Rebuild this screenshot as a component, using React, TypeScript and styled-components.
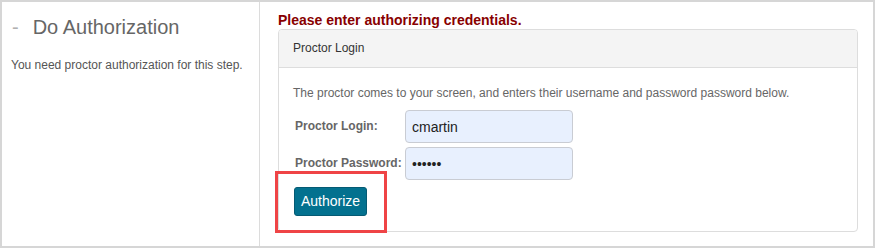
import React from "react";
import styled, { createGlobalStyle } from "styled-components";

const Global = createGlobalStyle`
  html, body { margin: 0; padding: 0; background: #fff; }
  body { font-family: "Liberation Sans", Arial, sans-serif; }
  * { box-sizing: border-box; }
`;

const Frame = styled.div`
  width: 875px;
  height: 248px;
  border: 2px solid #d6d6d6;
  display: grid;
  grid-template-columns: 257px 1px 1fr;
  background: #fff;
`;

const Sidebar = styled.div`
  padding: 13px 9px 0 9px;
`;

const Divider = styled.div`
  background: #dcdcdc;
`;

const Heading = styled.h2`
  margin: 0;
  font-size: 20px;
  line-height: 24px;
  font-weight: normal;
  color: #666;
  display: flex;
  align-items: center;
`;

const Dash = styled.span`
  color: #b0b0b0;
  margin: 0 14px 0 1px;
`;

const SideText = styled.p`
  margin: 18px 0 0 0;
  font-size: 12px;
  line-height: 17px;
  color: #555;
`;

const Main = styled.div`
  padding: 10px 15px 0 18px;
`;

const Alert = styled.div`
  font-size: 14px;
  font-weight: bold;
  line-height: 17px;
  color: #880000;
`;

const Panel = styled.div`
  border: 1px solid #dddddd;
  border-radius: 4px;
  width: 580px;
  height: 203px;
  overflow: visible;
`;

const PanelHeader = styled.div`
  background: #f4f4f4;
  border-bottom: 1px solid #dddddd;
  border-radius: 3px 3px 0 0;
  padding: 10px 14px;
  font-size: 12px;
  line-height: 17px;
  color: #333;
`;

const PanelBody = styled.div`
  padding: 17px 14px 15px 14px;
`;

const Intro = styled.p`
  margin: 0 0 8px 0;
  font-size: 12px;
  line-height: 17px;
  color: #666;
`;

const Form = styled.div`
  display: grid;
  grid-template-columns: 110px 168px;
  row-gap: 4px;
  align-items: center;
  margin-left: 2px;
`;

const Label = styled.label`
  font-size: 12px;
  font-weight: bold;
  color: #666;
  line-height: 17px;
`;

const Input = styled.input<{ $h: number }>`
  height: ${(p) => p.$h}px;
  width: 168px;
  border: 1px solid #c9ccd3;
  border-radius: 4px;
  background: #e8f0fe;
  padding: 0 6px;
  font-family: "Liberation Sans", Arial, sans-serif;
  font-size: 14px;
  color: #222;
  outline: none;
`;

const Actions = styled.div`
  margin-top: 7px;
  margin-left: 1px;
`;

const Highlight = styled.div`
  position: relative;
  display: inline-block;
`;

const Ring = styled.div`
  position: absolute;
  left: -19px;
  right: -20px;
  top: -16px;
  bottom: -17px;
  border: 3px solid #ef4446;
  pointer-events: none;
`;

const Button = styled.button`
  display: block;
  background: #03718f;
  border: 1px solid #055a73;
  border-radius: 3px;
  color: #fff;
  font-family: "Liberation Sans", Arial, sans-serif;
  font-size: 14px;
  line-height: 17px;
  padding: 5px 6px;
  cursor: pointer;
`;

export default function App() {
  return (
    <>
      <Global />
      <Frame>
        <Sidebar>
          <Heading>
            <Dash>-</Dash>Do Authorization
          </Heading>
          <SideText>You need proctor authorization for this step.</SideText>
        </Sidebar>
        <Divider />
        <Main>
          <Alert>Please enter authorizing credentials.</Alert>
          <Panel>
            <PanelHeader>Proctor Login</PanelHeader>
            <PanelBody>
              <Intro>
                The proctor comes to your screen, and enters their username and password password below.
              </Intro>
              <Form>
                <Label htmlFor="pl">Proctor Login:</Label>
                <Input id="pl" $h={33} type="text" defaultValue="cmartin" readOnly />
                <Label htmlFor="pp">Proctor Password:</Label>
                <Input id="pp" $h={33} type="password" defaultValue="secret" readOnly />
              </Form>
              <Actions>
                <Highlight>
                  <Button type="button">Authorize</Button>
                  <Ring />
                </Highlight>
              </Actions>
            </PanelBody>
          </Panel>
        </Main>
      </Frame>
    </>
  );
}
